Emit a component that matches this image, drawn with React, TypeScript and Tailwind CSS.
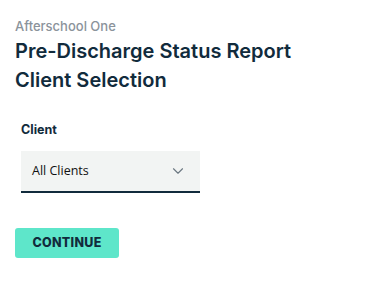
import { ChevronDown } from 'lucide-react';

export default function App() {
    return (
        <div className="min-h-[284px] w-full bg-white px-[15px] pt-[18px] font-['Inter',sans-serif]">
            {/* Header */}
            <div className="text-[13px] leading-[16px] font-medium text-[#8b939b]">Afterschool One</div>
            <h1 className="mt-[3px] text-[20px] leading-[29px] font-semibold text-[#112b3c]">
                Pre-Discharge Status Report
                <br />
                Client Selection
            </h1>

            {/* Client select */}
            <div className="mt-[27px] px-[6px]">
                <label className="block text-[12.5px] leading-[16px] font-bold text-[#112b3c]">Client</label>
                <button
                    type="button"
                    className="mt-[13px] flex h-[42px] w-[179px] items-center justify-between border-b-2 border-[#112b3c] bg-[#f2f4f3] pl-[11px] pr-[13px] font-['Open_Sans',sans-serif] text-[12.5px] text-[#111]"
                >
                    <span>All Clients</span>
                    <ChevronDown className="h-[18px] w-[18px] text-[#6b7780]" strokeWidth={1.5} />
                </button>
            </div>

            {/* Continue */}
            <button
                type="button"
                className="mt-[35px] h-[30px] w-[104px] rounded-[3px] bg-[#5ee6ca] text-[12.5px] font-extrabold tracking-[0.3px] text-[#112b3c]"
            >
                CONTINUE
            </button>
        </div>
    );
}
